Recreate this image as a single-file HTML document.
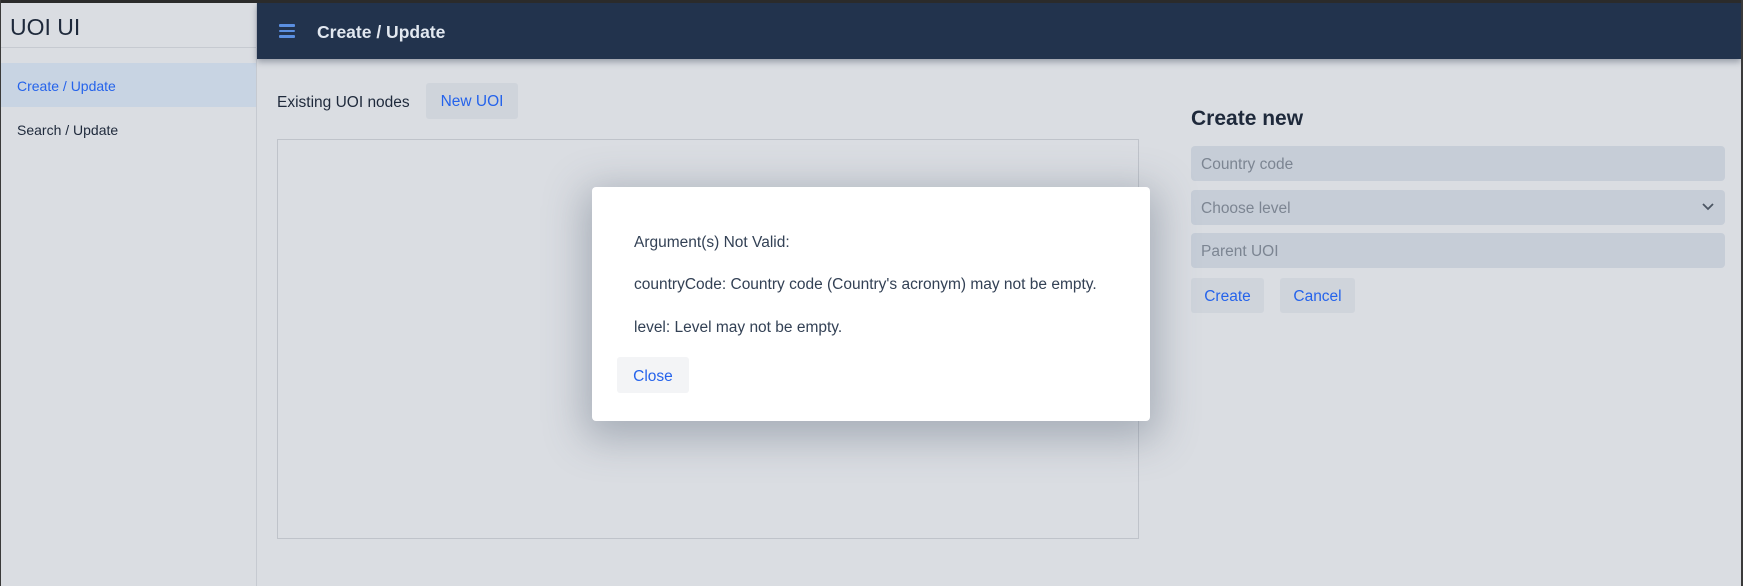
<!DOCTYPE html>
<html><head><meta charset="utf-8"><style>
*{box-sizing:border-box;margin:0;padding:0}
html,body{width:1743px;height:586px;overflow:hidden;background:#dadde2;font-family:"Liberation Sans",sans-serif;color:#1e293b}
.frame-top{position:absolute;left:0;top:0;width:1743px;height:3px;background:#2b2b2b}
.frame-left{position:absolute;left:0;top:0;width:1px;height:586px;background:#3a3a3a}
.frame-right{position:absolute;right:0;top:0;width:2px;height:586px;background:#3a3a3a}
.side{position:absolute;left:1px;top:3px;width:256px;height:583px;border-right:1px solid #c6cad1;background:#dadde2}
.brand{position:absolute;left:9px;top:11px;font-size:23px;color:#1e293b}
.sdiv{position:absolute;left:0;top:44px;width:255px;height:1px;background:#c6cad1}
.nav{position:absolute;left:0;width:255px;height:44px;font-size:14px;padding-left:16px;line-height:46px}
.nav.a{top:60px;background:#c8d4e3;color:#2563eb}
.nav.b{top:104px;color:#1e293b}
.hdr{position:absolute;left:257px;top:3px;width:1484px;height:56px;background:#22334d;box-shadow:0 3px 6px rgba(30,41,59,.35)}
.ham{position:absolute;left:22px;top:21px;width:16px;height:14px}
.ham i{display:block;height:2.5px;background:#5b8fe0;margin-bottom:3.2px;border-radius:1px}
.htitle{position:absolute;left:60px;top:19px;font-size:17.5px;font-weight:bold;color:#e2e8f0}
.ex{position:absolute;left:277px;top:94px;font-size:15.5px}
.btn{position:absolute;background:#cfd4db;color:#2563eb;font-size:15.5px;text-align:center;border-radius:3px}
.box{position:absolute;left:277px;top:139px;width:862px;height:400px;border:1px solid #bfc3ca}
.cn{position:absolute;left:1191px;top:107px;font-size:21px;font-weight:bold;color:#1e293b}
.inp{position:absolute;left:1191px;width:534px;height:35px;background:#c6cdd7;border-radius:4px;font-size:15.5px;color:#7c8592;padding-left:10px;line-height:38px}
.chev{position:absolute;right:10px;top:12px}
.modal{position:absolute;left:592px;top:187px;width:558px;height:234px;background:#fff;border-radius:4px;box-shadow:0 10px 40px 8px rgba(71,85,105,.35)}
.modal p{position:absolute;left:42px;font-size:15.5px;color:#334155}
</style></head><body>
<div class="side">
<div class="brand">UOI UI</div>
<div class="sdiv"></div>
<div class="nav a">Create / Update</div>
<div class="nav b">Search / Update</div>
</div>
<div class="hdr"><div class="ham"><i></i><i></i><i></i></div><div class="htitle">Create / Update</div></div>
<div class="ex">Existing UOI nodes</div>
<div class="btn" style="left:426px;top:83px;width:92px;height:36px;line-height:38px">New UOI</div>
<div class="box"></div>
<div class="cn">Create new</div>
<div class="inp" style="top:146px">Country code</div>
<div class="inp" style="top:190px">Choose level<svg class="chev" width="14" height="10" viewBox="0 0 14 10"><path d="M2 2l5 5 5-5" stroke="#4b5563" stroke-width="1.8" fill="none"/></svg></div>
<div class="inp" style="top:233px">Parent UOI</div>
<div class="btn" style="left:1191px;top:278px;width:73px;height:35px;line-height:38px">Create</div>
<div class="btn" style="left:1280px;top:278px;width:75px;height:35px;line-height:38px">Cancel</div>
<div class="modal">
<p style="top:47px">Argument(s) Not Valid:</p>
<p style="top:89px">countryCode: Country code (Country's acronym) may not be empty.</p>
<p style="top:132px">level: Level may not be empty.</p>
<div class="btn" style="left:25px;top:170px;width:72px;height:36px;line-height:39px;background:#f3f4f6">Close</div>
</div>
<div class="frame-top"></div><div class="frame-left"></div><div class="frame-right"></div>
</body></html>
